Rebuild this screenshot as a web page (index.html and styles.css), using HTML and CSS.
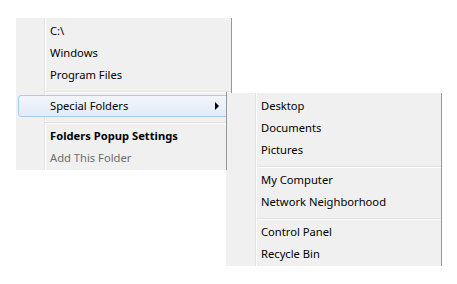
FILE: index.html
```html
<!DOCTYPE html>
<html>
<head>
<meta charset="utf-8">
<link rel="stylesheet" href="styles.css">
</head>
<body>
<div class="stage">
  <div class="menu main">
    <div class="item">C:\</div>
    <div class="item">Windows</div>
    <div class="item">Program Files</div>
    <div class="sep first"></div>
    <div class="item hot"><span>Special Folders</span><span class="arrow"></span></div>
    <div class="sep"></div>
    <div class="item bold">Folders Popup Settings</div>
    <div class="item dim">Add This Folder</div>
  </div>
  <div class="menu sub">
    <div class="item">Desktop</div>
    <div class="item">Documents</div>
    <div class="item">Pictures</div>
    <div class="sep"></div>
    <div class="item">My Computer</div>
    <div class="item">Network Neighborhood</div>
    <div class="sep"></div>
    <div class="item">Control Panel</div>
    <div class="item">Recycle Bin</div>
  </div>
</div>
</body>
</html>
```
FILE: styles.css
```css
html, body {
  margin: 0;
  background: #ffffff;
}
.stage {
  display: flex;
  align-items: flex-start;
  padding: 18px 0 0 16px;
  font-family: "Noto Sans", "DejaVu Sans", sans-serif;
  font-size: 11.2px;
  color: #000;
}
.menu {
  width: 215px;
  background-color: #f0f0f0;
  background-image: linear-gradient(to right, transparent 28px, #e2e3e3 28px, #e2e3e3 29px, #ffffff 29px, #ffffff 30px, transparent 30px);
  border-right: 1px solid #979797;
  padding: 2px 0 1px 0;
}
.sub {
  position: relative;
  margin-left: -6px;
  margin-top: 75px;
  padding-left: 1px;
  width: 214px;
  background-image: linear-gradient(to right, transparent 29px, #e2e3e3 29px, #e2e3e3 30px, #ffffff 30px, #ffffff 31px, transparent 31px);
}
.sub::before {
  content: "";
  position: absolute;
  left: 0;
  top: -1px;
  width: 1px;
  height: 78px;
  background: #979797;
}
.item {
  box-sizing: border-box;
  height: 22px;
  line-height: 22px;
  padding-left: 34px;
  white-space: nowrap;
  display: flex;
  align-items: center;
}
.bold {
  font-weight: bold;
}
.dim {
  color: #6d6d6d;
}
.sep {
  height: 8px;
  margin-left: 29px;
  background-image: linear-gradient(to bottom, transparent 5px, #e0e0e0 5px, #e0e0e0 6px, #ffffff 6px, #ffffff 7px, transparent 7px);
}
.sub .sep {
  margin-left: 30px;
}
.sep.first {
  height: 9px;
}
.hot {
  margin: 0 0 0 2px;
  padding-left: 31px;
  height: 22px;
  line-height: 20px;
  border: 1px solid #a8cbf3;
  border-radius: 3px;
  background: linear-gradient(to bottom, #f2f6fb, #e4ecf8);
  justify-content: space-between;
  padding-right: 11px;
}
.arrow {
  width: 0;
  height: 0;
  border-top: 4px solid transparent;
  border-bottom: 4px solid transparent;
  border-left: 4px solid #000;
}
```
